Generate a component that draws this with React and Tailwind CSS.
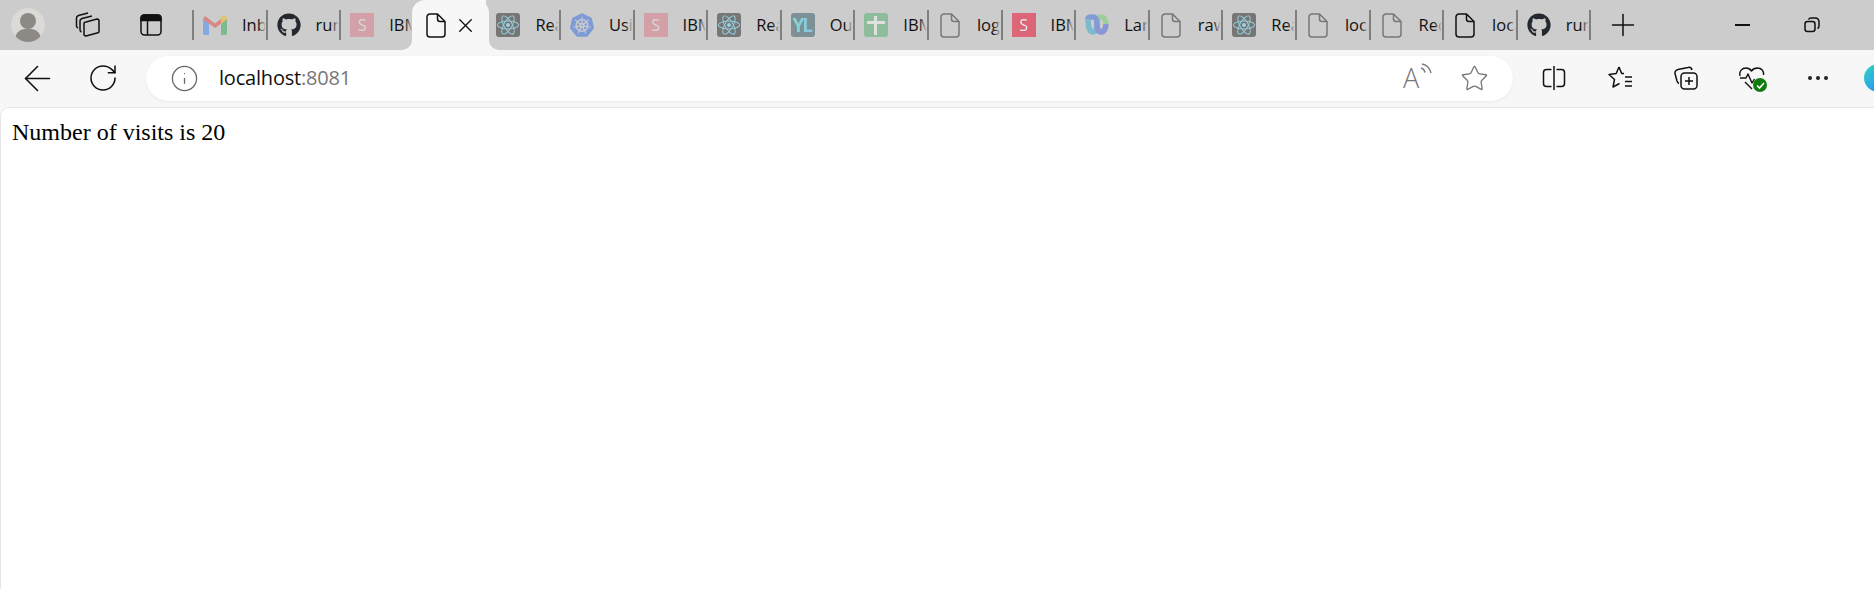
import React from 'react';
import { FaGithub, FaReact } from 'react-icons/fa';
import { SiKubernetes } from 'react-icons/si';
import { X, Plus, ArrowLeft, RotateCw, Star, Info } from 'lucide-react';

const FileIcon = ({ className }) => (
  <svg width="20" height="25" viewBox="0 0 20 25" fill="none" stroke="currentColor" strokeWidth="1.5" strokeLinejoin="round" className={className}>
    <path d="M4 1h7.5L19 8.5V21a3 3 0 0 1-3 3H4a3 3 0 0 1-3-3V4a3 3 0 0 1 3-3Z" />
    <path d="M11.5 1v5a2.5 2.5 0 0 0 2.5 2.5h5" />
  </svg>
);

const Gmail = () => (
  <svg width="24" height="20" viewBox="0 0 24 20" className="opacity-50">
    <path d="M0 4v14a2 2 0 0 0 2 2h4V8Z" fill="#4285f4" />
    <path d="M18 20h4a2 2 0 0 0 2-2V4l-6 4Z" fill="#34a853" />
    <path d="M0 4l12 9 12-9-2-3-4 3-6 4.500-6-4.500-4-3Z" fill="#ea4335" />
    <path d="M18 4v5l6-5c0-3-3-4-5-3Z" fill="#fbbc04" />
  </svg>
);

const SquareS = ({ faded }) => (
  <div className={`w-6 h-6 bg-[#e8213f] flex items-center justify-center text-white text-[16px] font-['Open_Sans',sans-serif] ${faded ? 'opacity-25' : 'opacity-60'}`}>S</div>
);

const ReactFav = () => (
  <div className="w-6 h-6 rounded-[3px] bg-[#222222] flex items-center justify-center opacity-50">
    <FaReact size={22} color="#61dafb" />
  </div>
);

const Kube = () => <SiKubernetes size={24} color="#326ce5" className="opacity-50" />;

const Yl = () => (
  <div className="w-6 h-6 rounded-[3px] bg-[#2f5560] flex items-center justify-center opacity-50 text-[19px] font-bold tracking-[-2px] font-['Open_Sans',sans-serif]">
    <span className="bg-gradient-to-r from-[#3fe0d8] to-[#4cc2ff] bg-clip-text text-transparent pr-[2px]">YL</span>
  </div>
);

const Sheets = () => (
  <div className="relative w-6 h-6 rounded-[3px] bg-[#34a853] opacity-40">
    <div className="absolute left-[3px] right-[3px] top-[8px] h-[3px] bg-white" />
    <div className="absolute left-[10px] top-[3px] bottom-[2px] w-[3px] bg-white" />
  </div>
);

const Webex = () => (
  <svg width="24" height="22" viewBox="0 0 24 22" fill="none" strokeWidth="5.5" className="opacity-50">
    <path d="M3 5c0 9 2 13 5 13s4-5 4-8" stroke="#30a9d0" />
    <path d="M12 10c0-3 1-7 4-7s5 3 5 7" stroke="#6fd36f" />
    <path d="M12 10c0 4 1 8 4 8s5-4 5-8" stroke="#4a63e0" />
    <path d="M12 10c0-3-1-7-4-7S3 3 3 5" stroke="#3a6fe0" />
  </svg>
);

const tabs = [
  { icon: <Gmail />, label: 'Inbox' },
  { icon: <FaGithub size={24} color="#24292f" />, label: 'run' },
  { icon: <SquareS faded />, label: 'IBM' },
  { active: true },
  { icon: <ReactFav />, label: 'React' },
  { icon: <Kube />, label: 'Using' },
  { icon: <SquareS faded />, label: 'IBM' },
  { icon: <ReactFav />, label: 'React' },
  { icon: <Yl />, label: 'Outline' },
  { icon: <Sheets />, label: 'IBM' },
  { icon: <FileIcon className="text-[#777777]" />, label: 'logs' },
  { icon: <SquareS />, label: 'IBM' },
  { icon: <Webex />, label: 'Larry' },
  { icon: <FileIcon className="text-[#777777]" />, label: 'raw' },
  { icon: <ReactFav />, label: 'React' },
  { icon: <FileIcon className="text-[#777777]" />, label: 'local' },
  { icon: <FileIcon className="text-[#777777]" />, label: 'Request' },
  { icon: <FileIcon className="text-[#111111]" />, label: 'local' },
  { icon: <FaGithub size={24} color="#24292f" />, label: 'run' },
];

const Tab = ({ tab }) => {
  if (tab.active) {
    return (
      <div className="relative z-10 w-[73.6px] h-[50px] -mx-[0.5px] shrink-0 bg-[#f7f7f7] rounded-tl-[13px] flex items-center pl-[14px] text-[#111111]">
        <div className="absolute -left-[10px] bottom-0 w-[10px] h-[10px] bg-[#f7f7f7]">
          <div className="w-full h-full bg-[#cccccc] rounded-br-[10px]" />
        </div>
        {/* right edge runs a little past the tab slot */}
        <div className="absolute -right-[3px] top-0 bottom-0 w-[16px] bg-[#f7f7f7] rounded-tr-[13px]" />
        <div className="absolute -right-[13px] bottom-0 w-[10px] h-[10px] bg-[#f7f7f7]">
          <div className="w-full h-full bg-[#cccccc] rounded-bl-[10px]" />
        </div>
        <FileIcon className="relative" />
        <X size={23} strokeWidth={1.45} className="relative ml-[8px] shrink-0" />
      </div>
    );
  }
  return (
    <div className="w-[73.6px] h-[50px] shrink-0 flex items-center">
      <div className="w-[2px] h-[30px] bg-[#7f7f7f] shrink-0" />
      <div className="w-6 ml-[9px] shrink-0 flex justify-center">{tab.icon}</div>
      <div className="relative ml-[15px] w-[24px] overflow-hidden whitespace-nowrap text-[16.5px] text-[#111111]">
        {tab.label}
        <div className="absolute right-0 top-0 bottom-0 w-2 bg-gradient-to-r from-transparent to-[#cccccc]" />
      </div>
    </div>
  );
};

const ToolBtn = ({ children }) => (
  <div className="w-[66px] h-[56px] shrink-0 flex items-center justify-center text-[#111111]">{children}</div>
);

export default function App() {
  return (
    <div className="h-[589px] overflow-hidden flex flex-col bg-[#f7f7f7] font-['Open_Sans',sans-serif]">
      {/* tab strip */}
      <div className="h-[50px] shrink-0 bg-[#cccccc] flex items-center overflow-hidden">
        <div className="ml-[11px] w-[34px] h-[34px] rounded-full bg-[#dbdad6] relative overflow-hidden shrink-0">
          <div className="absolute left-[9px] top-[5px] w-4 h-4 rounded-full bg-[#8d8a86]" />
          <div className="absolute left-[4px] top-[21px] w-[26px] h-5 rounded-full bg-[#8d8a86]" />
        </div>
        <svg width="26" height="26" viewBox="0 0 26 26" fill="none" stroke="#111111" strokeWidth="1.5" strokeLinejoin="round" className="ml-[30px] shrink-0">
          <path d="M11 24l11-3a2 2 0 0 0 2-2V9a2 2 0 0 0-2-2l-11 3a2 2 0 0 0-2 2v10a2 2 0 0 0 2 2Z" />
          <path d="M6.500 20c-1-.5-1.500-1-1.500-2V9c0-1 .5-2 2-2.500L17 4" />
          <path d="M3 16c-1-.5-1.500-1-1.500-2V6c0-1 .5-2 2-2.500L13 1" />
        </svg>
        <svg width="22" height="22" viewBox="0 0 22 22" fill="none" stroke="#111111" strokeWidth="1.5" className="ml-[39px] shrink-0">
          <rect x="1" y="1" width="20" height="20" rx="3.500" />
          <path d="M1 6.500V4a3 3 0 0 1 3-3h14a3 3 0 0 1 3 3v2.500Z" fill="#111111" />
          <path d="M7.500 6.500V21" />
        </svg>
        <div className="ml-[30px] flex shrink-0">
          {tabs.map((tab, i) => (
            <Tab key={i} tab={tab} />
          ))}
        </div>
        <div className="w-[2px] h-[30px] bg-[#7f7f7f] shrink-0" />
        <Plus size={36} strokeWidth={1} color="#111111" className="ml-[14px] shrink-0" />
        <div className="ml-[67px] w-[69px] shrink-0 flex justify-center">
          <div className="w-[15px] h-[2px] bg-[#111111]" />
        </div>
        <div className="w-[69px] shrink-0 flex justify-center">
          <svg width="16" height="16" viewBox="0 0 16 16" fill="none" stroke="#111111" strokeWidth="1.5">
            <rect x="1" y="4.500" width="10" height="10" rx="2.500" />
            <path d="M4.500 2.500c.5-1 1.200-1.500 2.500-1.500h4.500A3.500 3.500 0 0 1 15 4.500V9c0 1.300-.5 2-1.500 2.500" />
          </svg>
        </div>
        <div className="w-[69px] shrink-0 flex justify-center">
          <X size={16} strokeWidth={1.5} color="#111111" />
        </div>
      </div>

      {/* toolbar */}
      <div className="h-[56px] shrink-0 flex items-center pl-1">
        <ToolBtn>
          <ArrowLeft size={41} strokeWidth={0.95} />
        </ToolBtn>
        <ToolBtn>
          <RotateCw size={32} strokeWidth={1.15} />
        </ToolBtn>
        <div className="ml-[10px] w-[1367px] h-[45px] shrink-0 bg-white rounded-[23px] shadow-[0_1px_3px_rgba(0,0,0,0.06)] flex items-center pl-[24px] pr-[24px]">
          <Info size={29} strokeWidth={1.05} color="#666666" className="shrink-0" />
          <div className="ml-[20px] text-[20px] text-[#111111] tracking-[-0.2px]">
            localhost<span className="text-[#777777]">:8081</span>
          </div>
          <div className="ml-auto relative w-6 h-6 flex items-center text-[#777777]">
            <span className="text-[27px] leading-[24px] font-light">A</span>
            <svg width="13" height="13" viewBox="0 0 13 13" fill="none" stroke="currentColor" strokeWidth="1.4" className="absolute -right-[5px] -top-[3px]">
              <path d="M2 5c2 .5 3.500 2 4 4.500" />
              <path d="M3 1c4 .5 8 4 9 9" />
            </svg>
          </div>
          <Star size={29} strokeWidth={1.1} color="#777777" className="ml-[33px] shrink-0" />
        </div>
        <div className="ml-[8px] flex items-center">
          <ToolBtn>
            <svg width="24" height="24" viewBox="0 0 24 24" fill="none" stroke="#111111" strokeWidth="1.5">
              <path d="M9.500 3.500H4.500a3 3 0 0 0-3 3v11a3 3 0 0 0 3 3h5" />
              <path d="M14.500 3.500h5a3 3 0 0 1 3 3v11a3 3 0 0 1-3 3h-5" />
              <path d="M12 0v24" />
            </svg>
          </ToolBtn>
          <ToolBtn>
            <svg width="26" height="26" viewBox="0 0 26 26" fill="none" stroke="#111111" strokeWidth="1.5" strokeLinejoin="round">
              <path d="M12 2l2.700 6.500H17M12 2L9.200 8.500 2 9.500l5.500 5L6 22l6.500-3.500" />
              <path d="M18 12h7M18 16.500h7M18 21h7" />
            </svg>
          </ToolBtn>
          <ToolBtn>
            <svg width="26" height="26" viewBox="0 0 26 26" fill="none" stroke="#111111" strokeWidth="1.5" strokeLinejoin="round">
              <rect x="8" y="8" width="16" height="16" rx="3.500" />
              <path d="M16 12v8M12 16h8" />
              <path d="M19 5c-.5-2-2-3-4-2.500L5 4.500C3 5 1.500 6.500 2 8.500L4 16c.3 1 .8 2 2 2.500" />
            </svg>
          </ToolBtn>
          <ToolBtn>
            <div className="relative w-[26px] h-[26px]">
              <svg width="26" height="26" viewBox="0 0 26 26" fill="none" stroke="#111111" strokeWidth="1.4" strokeLinejoin="round">
                <path d="M1 11c-1-5 2-8 6-8 3 0 4.500 1.500 5.500 3 1-1.500 3-3 6-3 4 0 6.500 3 6 7" />
                <path d="M1 13h6l2-4 4 9 2.500-4" />
                <path d="M6 17l7 7" />
              </svg>
              <div className="absolute -right-[2px] -bottom-[1px] w-[14px] h-[14px] rounded-full bg-[#107c10] flex items-center justify-center">
                <svg width="9" height="9" viewBox="0 0 9 9" fill="none" stroke="white" strokeWidth="1.6">
                  <path d="M1 4.500l2.500 2.500L8 2" />
                </svg>
              </div>
            </div>
          </ToolBtn>
          <ToolBtn>
            <div className="flex gap-[4px]">
              <div className="w-[4px] h-[4px] rounded-full bg-[#222222]" />
              <div className="w-[4px] h-[4px] rounded-full bg-[#222222]" />
              <div className="w-[4px] h-[4px] rounded-full bg-[#222222]" />
            </div>
          </ToolBtn>
          <div className="ml-[13px] w-[30px] h-[28px] shrink-0 rounded-[50%] bg-gradient-to-br from-[#35d3b5] via-[#2fa8e8] to-[#1b6fc8]" />
        </div>
      </div>

      {/* page */}
      <div className="flex-1 mt-[1px] bg-white border-t border-l border-[#e6e6e6] rounded-tl-[9px] pl-[11px] pt-[10px] font-['Liberation_Serif',serif] text-[24px] leading-[28px] text-black">
        Number of visits is 20
      </div>
    </div>
  );
}
